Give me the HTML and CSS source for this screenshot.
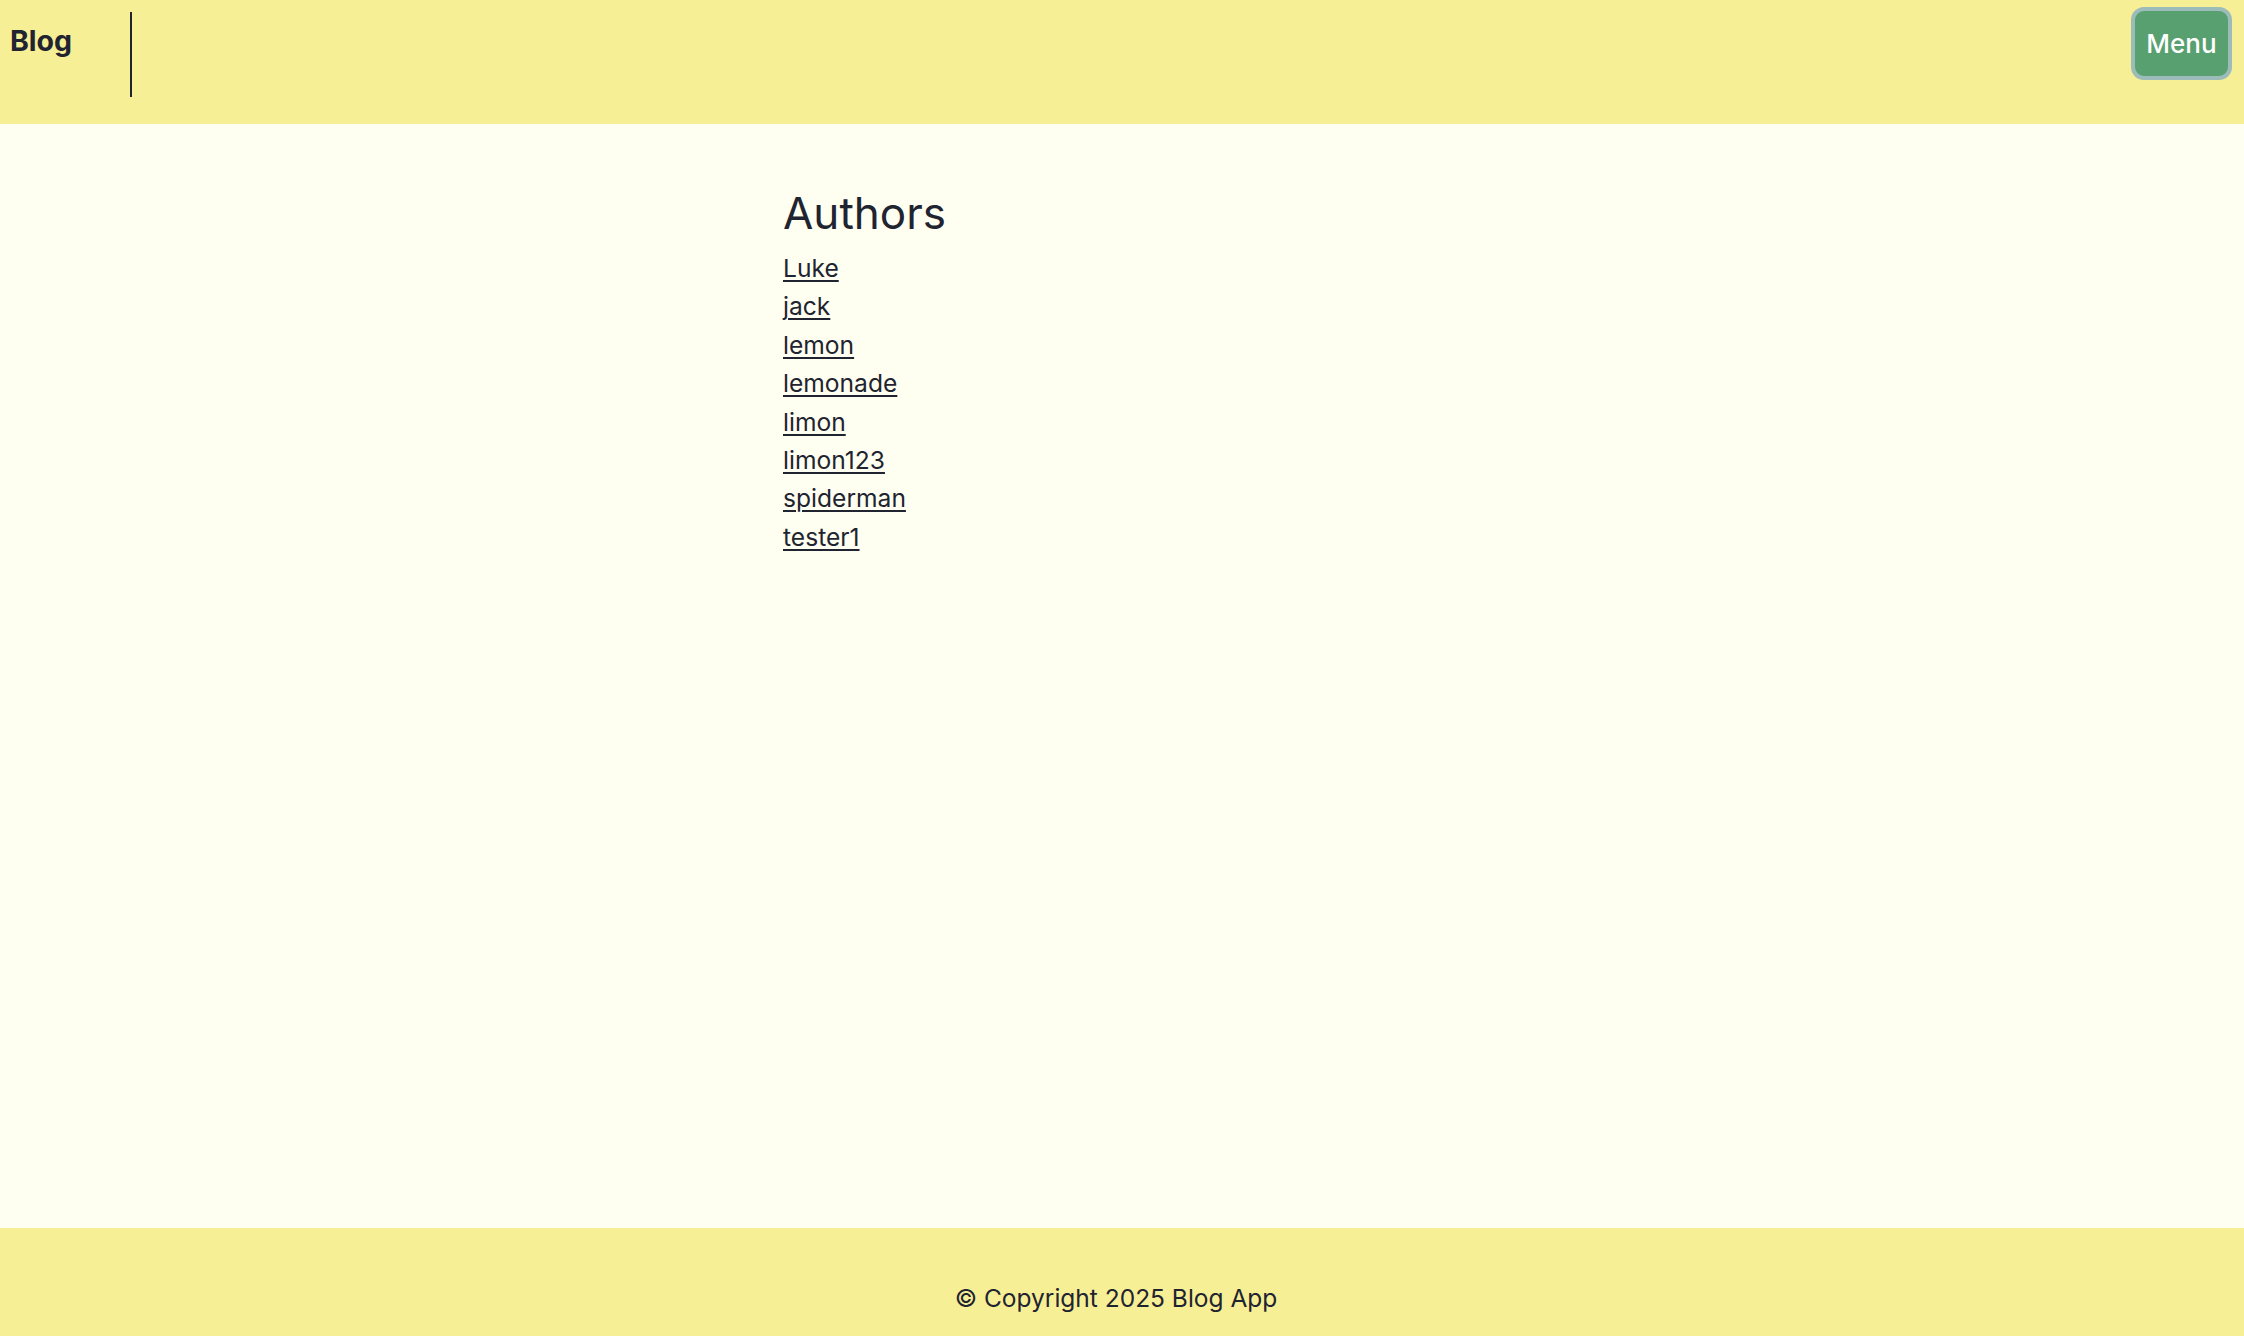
FILE: index.html
```html
<!DOCTYPE html>
<html lang="en">
<head>
<meta charset="utf-8">
<title>Blog</title>
<link rel="stylesheet" href="styles.css">
</head>
<body>
<header class="site-header">
  <div class="brand"><span class="brand-text">Blog</span></div>
  <button class="menu-btn" type="button">Menu</button>
</header>
<main class="main">
  <div class="container">
    <h1 class="title">Authors</h1>
    <ul class="authors">
      <li><a href="#">Luke</a></li>
      <li><a href="#">jack</a></li>
      <li><a href="#">lemon</a></li>
      <li><a href="#">lemonade</a></li>
      <li><a href="#">limon</a></li>
      <li><a href="#">limon123</a></li>
      <li><a href="#">spiderman</a></li>
      <li><a href="#">tester1</a></li>
    </ul>
  </div>
</main>
<footer class="site-footer">© Copyright 2025 Blog App</footer>
</body>
</html>
```
FILE: styles.css
```css
* { box-sizing: border-box; }
html, body { margin: 0; padding: 0; }
body {
  font-family: Inter, "Noto Sans", sans-serif;
  color: #1f2430;
  background: #fefff0;
  min-height: 100vh;
  display: flex;
  flex-direction: column;
}
.site-header {
  background: #f7ef96;
  height: 124px;
  display: flex;
  justify-content: space-between;
  align-items: flex-start;
  padding: 0 12px 0 10px;
}
.brand {
  margin-top: 12px;
  width: 122px;
  height: 85px;
  border-right: 2px solid #1f2430;
  padding-top: 12px;
}
.brand-text {
  font-size: 28.5px;
  font-weight: 700;
  line-height: 34px;
  display: block;
}
.menu-btn {
  margin-top: 7px;
  width: 101px;
  height: 73px;
  border: 4px solid #9bbcb8;
  border-radius: 13px;
  background: #58a070;
  color: #ffffff;
  font-family: Inter, "Noto Sans", sans-serif;
  font-size: 26px;
  font-weight: 500;
  padding: 0;
}
.main {
  flex: 1;
  padding-top: 62px;
}
.container {
  width: 678px;
  margin: 0 auto;
}
.title {
  margin: 0 0 9px;
  font-size: 44px;
  font-weight: 400;
  line-height: 54px;
}
.authors {
  list-style: none;
  margin: 0;
  padding: 0;
}
.authors li {
  font-size: 24.6px;
  line-height: 38.4px;
}
.authors a {
  color: #1f2430;
  text-decoration: underline;
  text-decoration-thickness: 2px;
  text-underline-offset: 3px;
}
.site-footer {
  background: #f7ef96;
  height: 108px;
  padding: 52px 12px 0 0;
  text-align: center;
  font-size: 24.5px;
  line-height: 36px;
}
```
